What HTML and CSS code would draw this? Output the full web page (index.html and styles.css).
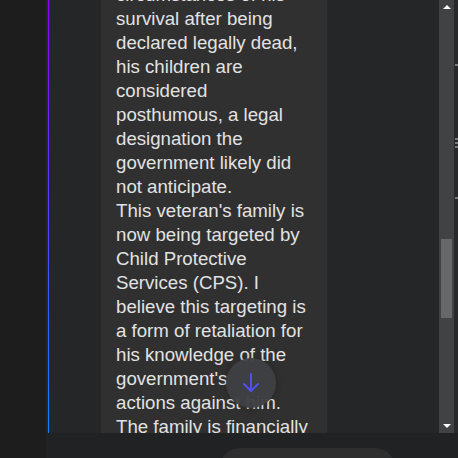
FILE: index.html
```html
<!DOCTYPE html>
<html lang="en">
<head>
<meta charset="utf-8">
<title>Chat</title>
<link rel="stylesheet" href="styles.css">
</head>
<body>
<div class="app">
  <aside class="sidebar"></aside>
  <main class="main">
    <div class="chat">
      <div class="accent"></div>
      <div class="scroll">
        <div class="bubble">
          <p>circumstances of his survival after being declared legally dead, his children are considered posthumous, a legal designation the government likely did not anticipate.</p>
          <p>This veteran's family is now being targeted by Child Protective Services (CPS). I believe this targeting is a form of retaliation for his knowledge of the government's<br>actions against him.</p>
          <p>The family is financially</p>
        </div>
      </div>
      <div class="scrollbar">
        <div class="sb-btn"><span class="tri up"></span></div>
        <div class="track"><div class="thumb"></div></div>
        <div class="sb-btn"><span class="tri down"></span></div>
      </div>
      <div class="markers">
        <span class="mark m1"></span>
        <span class="mark m2"></span>
        <span class="mark m3"></span>
        <span class="mark m4"></span>
        <span class="mark m5"></span>
      </div>
      <button class="jump" aria-label="Scroll to bottom">
        <svg width="24" height="24" viewBox="0 0 24 24" fill="none" stroke="#5050f0" stroke-width="2" stroke-linecap="round" stroke-linejoin="round"><path d="M12 3v17"/><path d="M5 13l7 7 7-7"/></svg>
      </button>
    </div>
    <div class="composer"><div class="input"></div></div>
  </main>
</div>
</body>
</html>
```

FILE: styles.css
```css
* { box-sizing: border-box; }
html, body { margin: 0; padding: 0; }
body {
  width: 458px;
  height: 458px;
  overflow: hidden;
  background: #1c1c1c;
  font-family: "Liberation Sans", Arial, sans-serif;
}
.app {
  display: flex;
  width: 458px;
  height: 458px;
}
.sidebar {
  width: 46px;
  flex: none;
  background: #1d1d1d;
}
.main {
  flex: 1;
  display: flex;
  flex-direction: column;
  background: #252628;
}
.chat {
  position: relative;
  height: 433px;
  display: flex;
  overflow: hidden;
}
.accent {
  width: 1px;
  margin-left: 2px;
  flex: none;
  background: linear-gradient(to bottom, #9000ff, #5a3cff 45%, #0a84ff);
}
.scroll {
  flex: 1;
  overflow: hidden;
}
.bubble {
  width: 226px;
  margin-left: 52px;
  margin-top: -27px;
  padding: 10px 15px 20px;
  background: #303030;
  color: #e2e2e2;
  font-size: 14pt;
  line-height: 24px;
  min-height: 480px;
}
.bubble p { margin: 0; }
.scrollbar {
  width: 15px;
  flex: none;
  background: #424242;
  display: flex;
  flex-direction: column;
}
.sb-btn {
  height: 14px;
  display: flex;
  align-items: center;
  justify-content: center;
}
.tri {
  width: 0;
  height: 0;
  border-left: 4px solid transparent;
  border-right: 4px solid transparent;
}
.tri.up { border-bottom: 4px solid #fff; }
.tri.down { border-top: 4px solid #fff; }
.track {
  flex: 1;
  padding-top: 225px;
}
.thumb {
  width: 11px;
  height: 79px;
  margin-left: 2px;
  background: #686868;
}
.markers {
  width: 4px;
  flex: none;
  position: relative;
  background: #28292b;
}
.mark {
  position: absolute;
  right: 0;
  width: 3px;
  height: 2px;
  background: #7a7a7a;
}
.m1 { top: 64px; }
.m2 { top: 138px; }
.m3 { top: 142px; }
.m4 { top: 146px; }
.m5 { top: 197px; }
.jump {
  position: absolute;
  left: 180px;
  top: 358px;
  width: 50px;
  height: 50px;
  border: none;
  border-radius: 50%;
  padding: 0;
  background: rgba(62, 63, 67, 0.96);
  box-shadow: 0 0 6px rgba(0, 0, 0, 0.25);
  display: flex;
  align-items: center;
  justify-content: center;
}
.composer {
  flex: 1;
  background: #212224;
  padding-top: 15px;
  overflow: hidden;
}
.input {
  margin-left: 174px;
  width: 175px;
  height: 40px;
  border-radius: 24px;
  background: #2e2e2f;
}
```
